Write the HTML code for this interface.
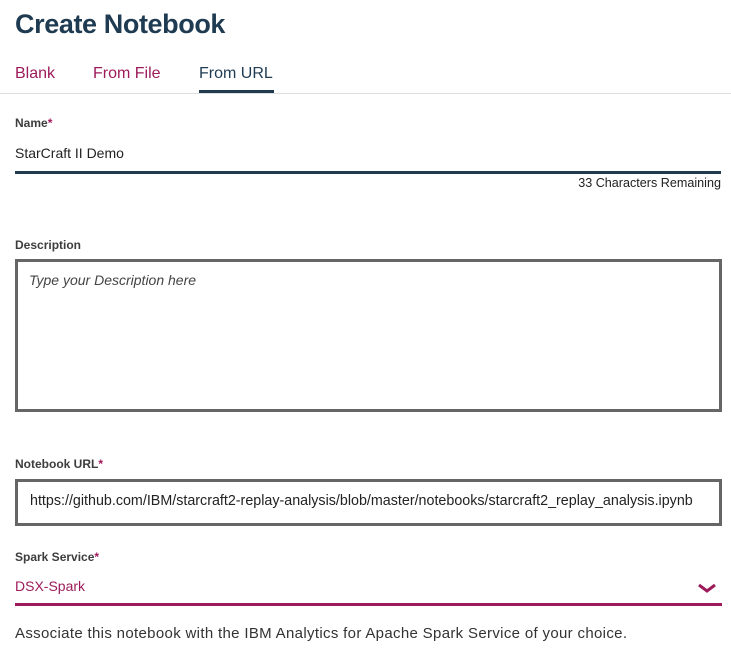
<!DOCTYPE html>
<html><head><meta charset="utf-8"><style>
*{margin:0;padding:0;box-sizing:border-box}
body{width:731px;height:658px;background:#fff;font-family:"Liberation Sans",Arial,sans-serif;position:relative;overflow:hidden;color:#222}
.a{position:absolute;white-space:nowrap}
.lbl{font-size:12px;font-weight:bold;color:#3d3d3d}
.st{color:#a0195b}
</style></head><body>
<div class="a" style="left:15px;top:9px;font-size:27px;font-weight:bold;color:#1f3b52;letter-spacing:-0.4px">Create Notebook</div>
<div class="a" style="left:15px;top:65px;font-size:16px;color:#9d1b5a">Blank</div>
<div class="a" style="left:93px;top:65px;font-size:16px;color:#9d1b5a">From File</div>
<div class="a" style="left:199px;top:65px;font-size:16px;color:#1f3b52">From URL</div>
<div class="a" style="left:0;top:93px;width:731px;height:1px;background:#ddd"></div>
<div class="a" style="left:199px;top:90px;width:75px;height:3px;background:#203a50"></div>

<div class="a lbl" style="left:15px;top:116px">Name<span class="st">*</span></div>
<div class="a" style="left:15px;top:145px;font-size:14px">StarCraft II Demo</div>
<div class="a" style="left:15px;top:171px;width:706px;height:3px;background:#203a50"></div>
<div class="a" style="right:10px;top:176px;font-size:12.6px;color:#222">33 Characters Remaining</div>

<div class="a lbl" style="left:15px;top:238px">Description</div>
<div class="a" style="left:15px;top:259px;width:707px;height:153px;border:3px solid #666"></div>
<div class="a" style="left:29px;top:272px;font-size:14px;font-style:italic;color:#444">Type your Description here</div>

<div class="a lbl" style="left:15px;top:457px">Notebook URL<span class="st">*</span></div>
<div class="a" style="left:15px;top:479px;width:707px;height:47px;border:3px solid #666"></div>
<div class="a" style="left:30px;top:493px;font-size:14.3px;color:#222">https://github.com/IBM/starcraft2-replay-analysis/blob/master/notebooks/starcraft2_replay_analysis.ipynb</div>

<div class="a lbl" style="left:15px;top:550px">Spark Service<span class="st">*</span></div>
<div class="a" style="left:15px;top:578px;font-size:14px;color:#9d1b5a">DSX-Spark</div>
<svg class="a" style="left:697px;top:582px" width="20" height="12" viewBox="0 0 20 12"><path d="M2 3 L10 9 L18 3" fill="none" stroke="#9d1b5a" stroke-width="3"/></svg>
<div class="a" style="left:15px;top:603px;width:707px;height:3px;background:#9d1b5a"></div>
<div class="a" style="left:15px;top:625px;font-size:15px;letter-spacing:0.33px;color:#333">Associate this notebook with the IBM Analytics for Apache Spark Service of your choice.</div>
</body></html>
